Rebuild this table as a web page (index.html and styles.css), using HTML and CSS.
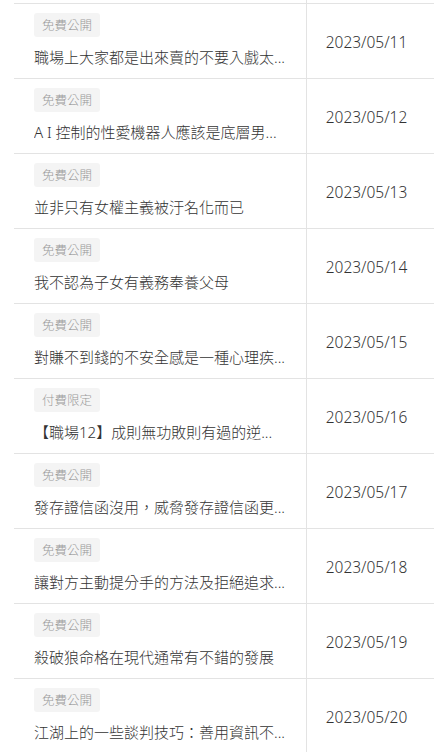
FILE: index.html
```html
<!DOCTYPE html>
<html lang="zh-Hant">
<head>
<meta charset="utf-8">
<link rel="stylesheet" href="styles.css">
</head>
<body>
<div class="list">
  <div class="stub"><div class="stub-main"></div></div>
  <div class="row"><div class="main"><span class="badge">免費公開</span><div class="title">職場上大家都是出來賣的不要入戲太...</div></div><div class="date">2023/05/11</div></div>
  <div class="row"><div class="main"><span class="badge">免費公開</span><div class="title">A I 控制的性愛機器人應該是底層男...</div></div><div class="date">2023/05/12</div></div>
  <div class="row"><div class="main"><span class="badge">免費公開</span><div class="title">並非只有女權主義被汙名化而已</div></div><div class="date">2023/05/13</div></div>
  <div class="row"><div class="main"><span class="badge">免費公開</span><div class="title">我不認為子女有義務奉養父母</div></div><div class="date">2023/05/14</div></div>
  <div class="row"><div class="main"><span class="badge">免費公開</span><div class="title">對賺不到錢的不安全感是一種心理疾...</div></div><div class="date">2023/05/15</div></div>
  <div class="row"><div class="main"><span class="badge">付費限定</span><div class="title">【職場12】成則無功敗則有過的逆...</div></div><div class="date">2023/05/16</div></div>
  <div class="row"><div class="main"><span class="badge">免費公開</span><div class="title">發存證信函沒用，威脅發存證信函更...</div></div><div class="date">2023/05/17</div></div>
  <div class="row"><div class="main"><span class="badge">免費公開</span><div class="title">讓對方主動提分手的方法及拒絕追求...</div></div><div class="date">2023/05/18</div></div>
  <div class="row"><div class="main"><span class="badge">免費公開</span><div class="title">殺破狼命格在現代通常有不錯的發展</div></div><div class="date">2023/05/19</div></div>
  <div class="row"><div class="main"><span class="badge">免費公開</span><div class="title">江湖上的一些談判技巧：善用資訊不...</div></div><div class="date">2023/05/20</div></div>
</div>
</body>
</html>
```

FILE: styles.css
```css
html, body {
  margin: 0;
  padding: 0;
  background: #ffffff;
}
body {
  font-family: "Noto Sans", "Noto Sans CJK TC", sans-serif;
  font-weight: 300;
  color: #333333;
  overflow: hidden;
}
.list {
  margin-left: 14px;
}
.stub {
  height: 3px;
  display: flex;
}
.stub-main {
  width: 293px;
  box-sizing: border-box;
  border-right: 1px solid #e3e3e3;
}
.row {
  display: flex;
  height: 75px;
  box-sizing: border-box;
  border-top: 1px solid #e3e3e3;
}
.main {
  width: 293px;
  box-sizing: border-box;
  border-right: 1px solid #e3e3e3;
  padding: 9px 20px 0 20px;
}
.badge {
  display: inline-block;
  height: 24px;
  line-height: 24px;
  padding: 0 8px;
  font-size: 12.5px;
  color: #9a9a9a;
  background: #f4f4f4;
  border-radius: 3px;
  font-family: "Noto Sans CJK TC", sans-serif;
}
.title {
  margin-top: 9px;
  font-size: 15px;
  line-height: 22px;
  white-space: nowrap;
  overflow: hidden;
  color: #333333;
}
.date {
  flex: 1;
  display: flex;
  align-items: center;
  justify-content: center;
  padding: 2px 8px 0 0;
  font-size: 15.5px;
  color: #333333;
}
```
